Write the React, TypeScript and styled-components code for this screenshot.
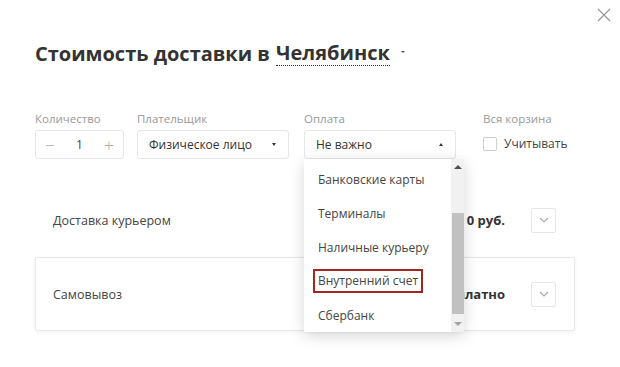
import styled, { createGlobalStyle } from "styled-components";

const GlobalStyle = createGlobalStyle`
  html, body {
    margin: 0;
    padding: 0;
    background: #fff;
  }
  body {
    font-family: "Open Sans", "Liberation Sans", sans-serif;
    color: #333;
  }
  * { box-sizing: border-box; }
`;

const Modal = styled.div`
  position: relative;
  width: 620px;
  height: 367px;
  padding: 40px 45px 0 35px;
  overflow: hidden;
`;

const Close = styled.button`
  position: absolute;
  top: 8px;
  right: 9px;
  width: 14px;
  height: 14px;
  padding: 0;
  border: 0;
  background: none;
  cursor: pointer;
`;

const Title = styled.h1`
  display: flex;
  align-items: center;
  margin: 0;
  font-size: 20px;
  font-weight: 700;
  line-height: 27px;
  color: #333;
`;

const City = styled.span`
  margin-left: 6px;
  border-bottom: 1px dotted #333;
  line-height: 24px;
`;

const CityArrow = styled.span`
  margin-left: 11px;
  margin-top: -4px;
  width: 0;
  height: 0;
  border-left: 2px solid transparent;
  border-right: 2px solid transparent;
  border-top: 2px solid #555;
`;

const Filters = styled.div`
  display: flex;
  margin-top: 44px;
`;

const Field = styled.div<{ $w?: number }>`
  position: relative;
  width: ${({ $w }) => ($w ? `${$w}px` : "auto")};
  flex-shrink: 0;
`;

const Label = styled.div`
  font-size: 11.5px;
  line-height: 16px;
  color: #999;
  margin-bottom: 3px;
`;

const Counter = styled.div`
  display: flex;
  align-items: center;
  justify-content: space-between;
  width: 89px;
  height: 29px;
  padding: 0 8px;
  border: 1px solid #e6e6e6;
  border-radius: 3px;
  font-size: 12px;
  color: #444;
`;

const CounterBtn = styled.span`
  font-size: 18px;
  font-weight: 300;
  color: #aaa;
  width: 12px;
  text-align: center;
`;

const Select = styled.div`
  display: flex;
  align-items: center;
  justify-content: space-between;
  width: 152px;
  height: 29px;
  padding: 0 12px 0 11px;
  border: 1px solid #e6e6e6;
  border-radius: 3px;
  font-size: 12px;
  color: #333;
`;

const Caret = styled.span<{ $up?: boolean }>`
  width: 0;
  height: 0;
  border-left: 2.5px solid transparent;
  border-right: 2.5px solid transparent;
  ${({ $up }) =>
    $up ? "border-bottom: 3px solid #333;" : "border-top: 3px solid #333;"}
`;

const Check = styled.label`
  display: flex;
  align-items: center;
  gap: 7px;
  margin-top: 8px;
  font-size: 12px;
  color: #444;
`;

const Box = styled.span`
  width: 14px;
  height: 14px;
  border: 1px solid #ccc;
  border-radius: 2px;
  background: #fff;
`;

const Dropdown = styled.div`
  position: absolute;
  top: 48px;
  left: 0;
  z-index: 5;
  display: flex;
  width: 160px;
  height: 173px;
  background: #fff;
  box-shadow: 0 4px 14px rgba(0, 0, 0, 0.16);
`;

const Options = styled.ul`
  flex: 1;
  margin: 0;
  padding: 3px 0 0;
  list-style: none;
`;

const Option = styled.li`
  display: flex;
  align-items: center;
  height: 34px;
  padding-left: 14px;
  font-size: 12px;
  color: #444;
`;

const Marked = styled.span`
  margin-left: -5px;
  padding: 0 3px 1px 3px;
  border: 2px solid #a0291f;
  line-height: 19px;
`;

const Scrollbar = styled.div`
  display: flex;
  flex-direction: column;
  align-items: center;
  width: 13px;
  background: #f1f1f1;
`;

const ScrollArrow = styled.span<{ $down?: boolean }>`
  margin: 6px 0;
  width: 0;
  height: 0;
  border-left: 4px solid transparent;
  border-right: 4px solid transparent;
  ${({ $down }) =>
    $down ? "border-top: 4px solid #a3a3a3;" : "border-bottom: 4px solid #505050;"}
`;

const Track = styled.div`
  flex: 1;
  width: 100%;
  padding: 38px 0 0 1px;
`;

const Thumb = styled.div`
  height: 101px;
  background: #c1c1c1;
`;

const Rows = styled.div`
  margin-top: 24px;
  width: 540px;
`;

const Row = styled.div<{ $active?: boolean }>`
  display: flex;
  align-items: center;
  height: 74px;
  padding: 0 18px 0 17px;
  border: 1px solid ${({ $active }) => ($active ? "#e8e8e8" : "transparent")};
  border-radius: 2px;
  box-shadow: ${({ $active }) =>
    $active ? "0 1px 4px rgba(0, 0, 0, 0.06)" : "none"};
`;

const Name = styled.div`
  flex: 1;
  font-size: 12.5px;
  color: #444;
`;

const Price = styled.div`
  font-size: 13px;
  font-weight: 700;
  color: #333;
  margin-right: 26px;
`;

const Toggle = styled.button`
  display: flex;
  align-items: center;
  justify-content: center;
  width: 25px;
  height: 25px;
  padding: 0;
  border: 1px solid #e6e6e6;
  border-radius: 2px;
  background: #fff;
`;

const Chevron = () => (
  <svg width="10" height="6" viewBox="0 0 10 6">
    <path d="M1 1l4 4 4-4" fill="none" stroke="#aaa" strokeWidth="1.2" />
  </svg>
);

const options = [
  "Банковские карты",
  "Терминалы",
  "Наличные курьеру",
  "Внутренний счет",
  "Сбербанк",
];

export default function App() {
  return (
    <Modal>
      <GlobalStyle />
      <Close aria-label="Закрыть">
        <svg width="14" height="14" viewBox="0 0 14 14">
          <path d="M1 1l12 12M13 1L1 13" stroke="#999" strokeWidth="1.3" />
        </svg>
      </Close>
      <Title>
        Стоимость доставки в<City>Челябинск</City>
        <CityArrow />
      </Title>

      <Filters>
        <Field $w={102}>
          <Label>Количество</Label>
          <Counter>
            <CounterBtn>−</CounterBtn>
            <span>1</span>
            <CounterBtn>+</CounterBtn>
          </Counter>
        </Field>
        <Field $w={167}>
          <Label>Плательщик</Label>
          <Select>
            Физическое лицо
            <Caret />
          </Select>
        </Field>
        <Field $w={179}>
          <Label>Оплата</Label>
          <Select>
            Не важно
            <Caret $up />
          </Select>
          <Dropdown>
            <Options>
              {options.map((o) => (
                <Option key={o}>
                  {o === "Внутренний счет" ? <Marked>{o}</Marked> : o}
                </Option>
              ))}
            </Options>
            <Scrollbar>
              <ScrollArrow />
              <Track>
                <Thumb />
              </Track>
              <ScrollArrow $down />
            </Scrollbar>
          </Dropdown>
        </Field>
        <Field>
          <Label>Вся корзина</Label>
          <Check>
            <Box />
            Учитывать
          </Check>
        </Field>
      </Filters>

      <Rows>
        <Row>
          <Name>Доставка курьером</Name>
          <Price>0 руб.</Price>
          <Toggle>
            <Chevron />
          </Toggle>
        </Row>
        <Row $active>
          <Name>Самовывоз</Name>
          <Price>Бесплатно</Price>
          <Toggle>
            <Chevron />
          </Toggle>
        </Row>
      </Rows>
    </Modal>
  );
}
